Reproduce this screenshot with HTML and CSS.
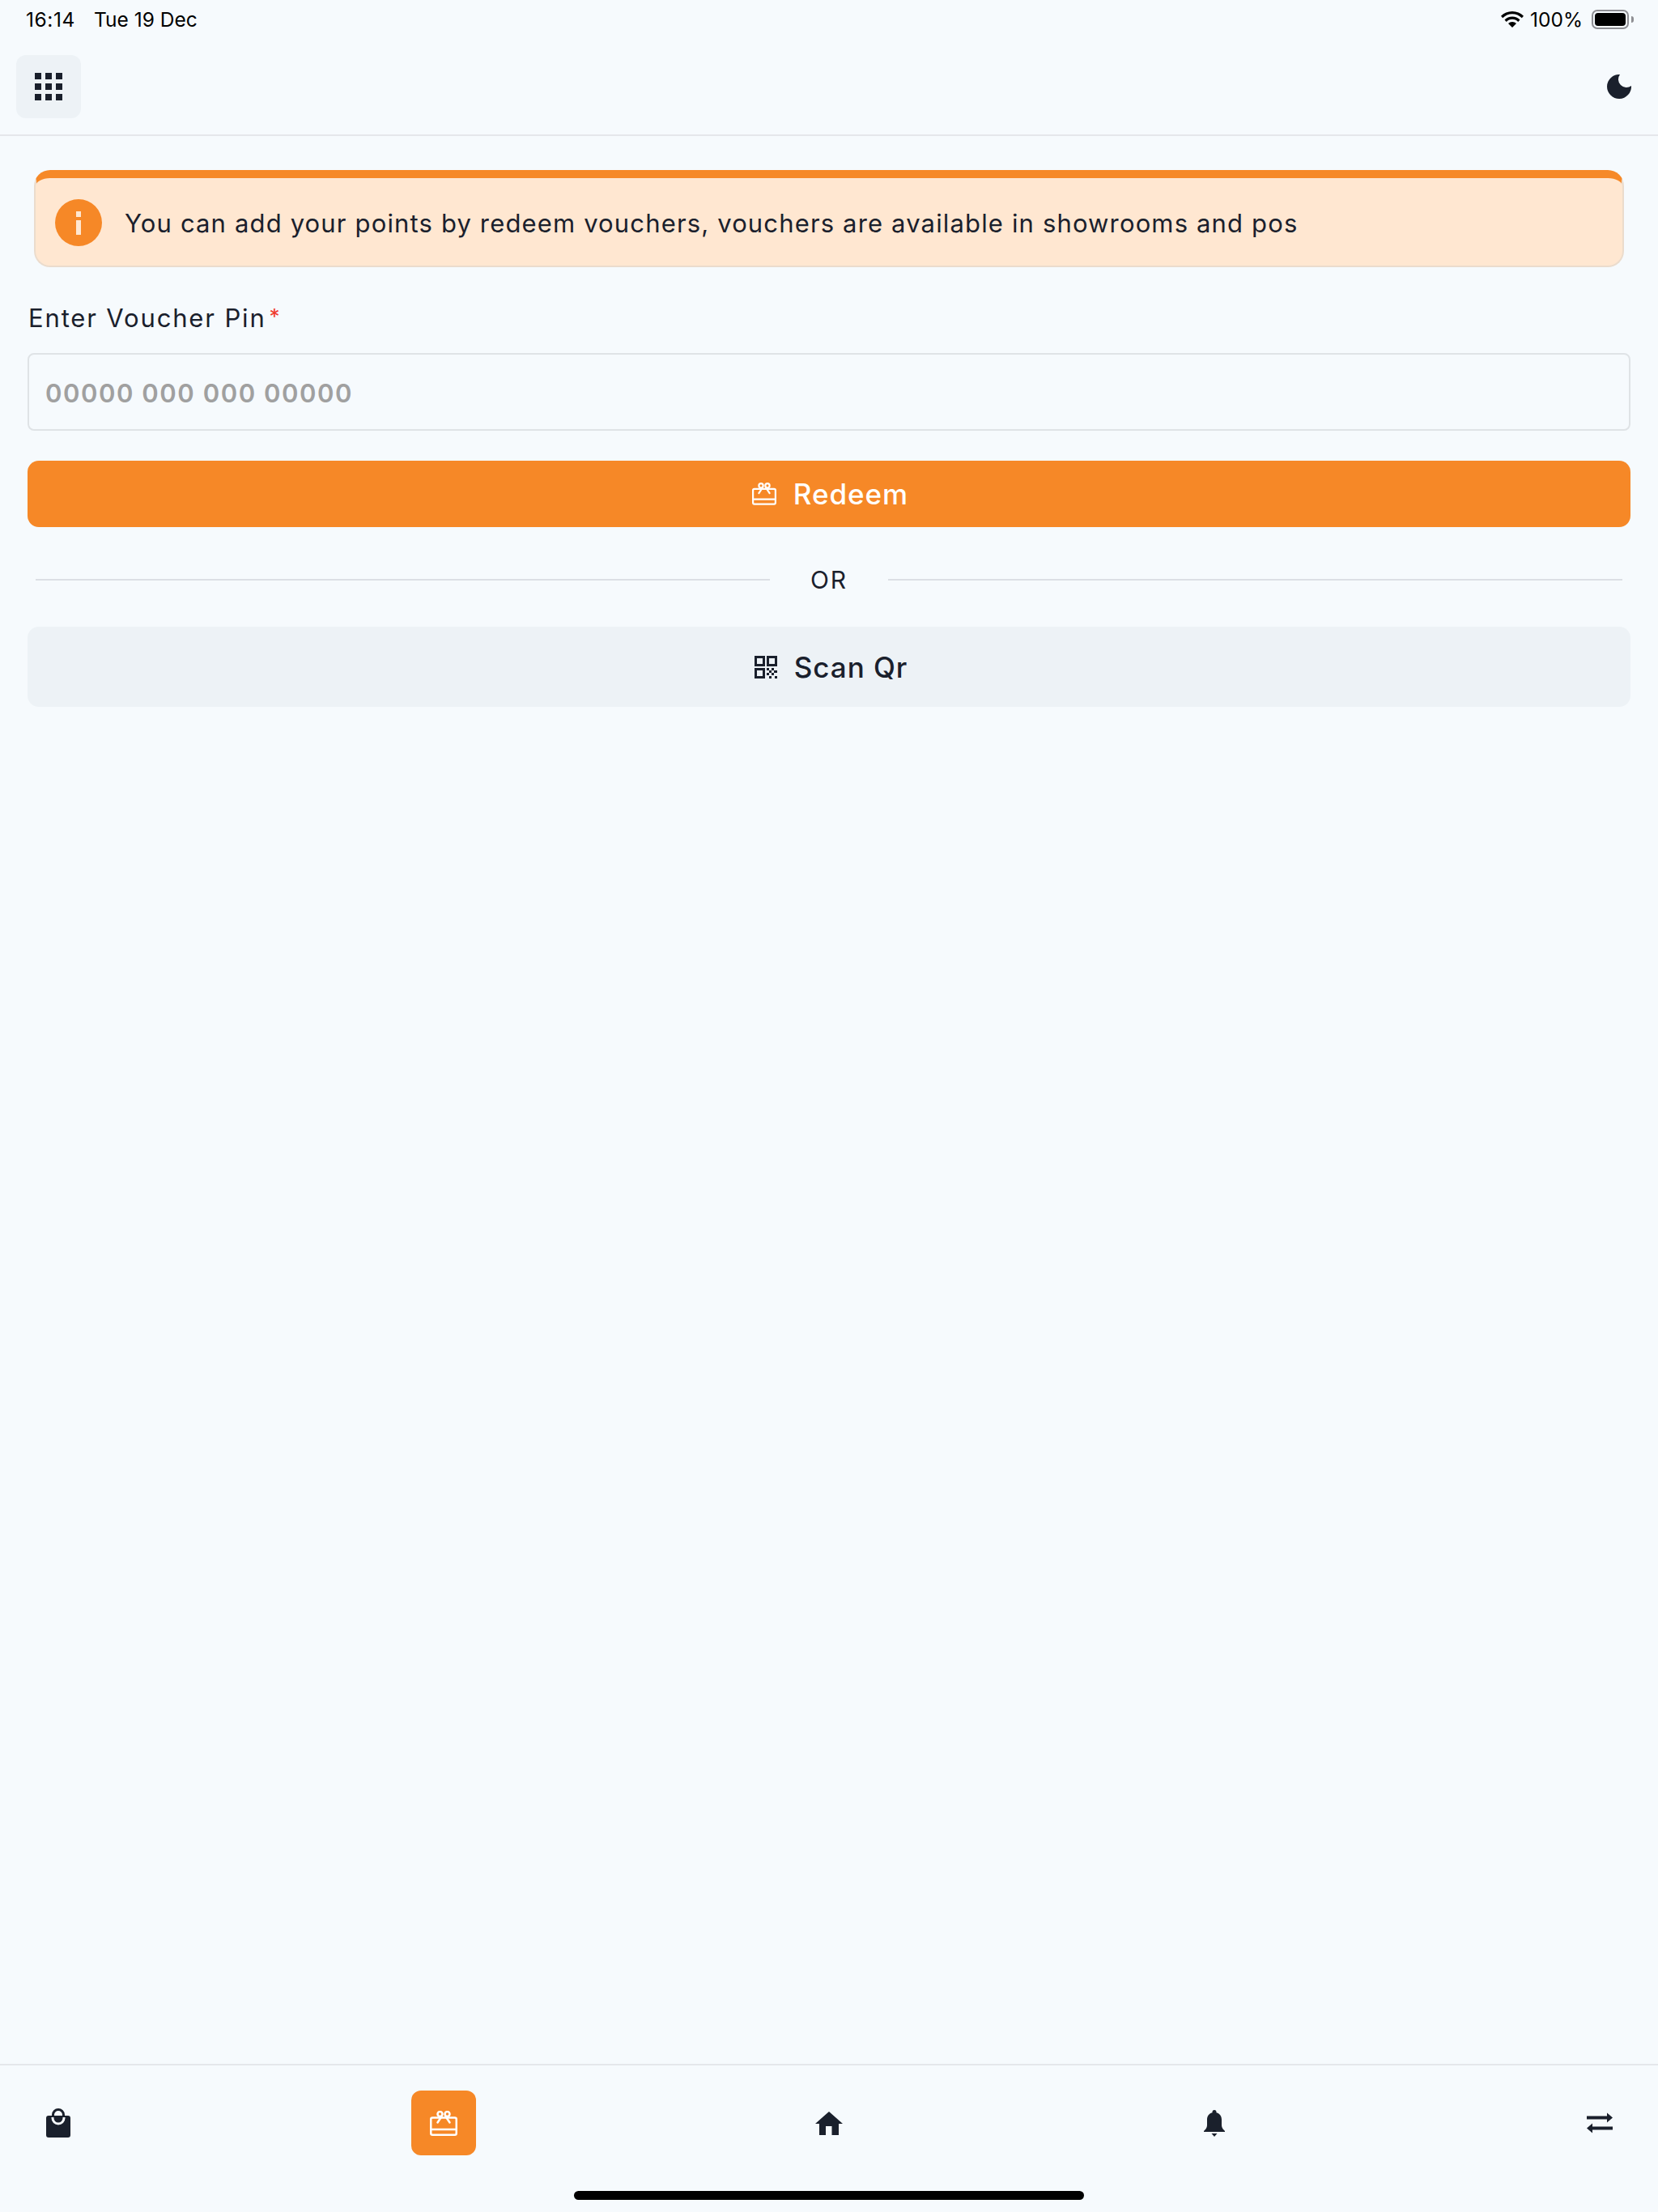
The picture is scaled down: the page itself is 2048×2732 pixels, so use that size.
FILE: index.html
```html
<!DOCTYPE html>
<html lang="en">
<head>
<meta charset="utf-8">
<title>Redeem Voucher</title>
<link rel="stylesheet" href="styles.css">
</head>
<body>
<div class="app">
  <div class="status">
    <div class="status-left"><span class="clock">16:14</span><span>Tue 19 Dec</span></div>
    <div class="status-right">
      <svg class="wifi" viewBox="0 0 28 20"><path d="M14 0C8.500 0 3.600 2.200 0 5.800L2.200 8.200C5.300 5.100 9.400 3.200 14 3.200s8.700 1.900 11.800 5L28 5.800C24.400 2.200 19.500 0 14 0z"/><path d="M14 6.500C10.300 6.500 7 8 4.500 10.500L6.800 12.900C8.700 11 11.200 9.800 14 9.800s5.300 1.200 7.200 3.100L23.500 10.500C21 8 17.700 6.500 14 6.500z"/><path d="M14 13C12 13 10.300 13.800 9 15.100L14 20 19 15.100C17.700 13.800 16 13 14 13z"/></svg>
      <span>100%</span>
      <span class="battery"><span class="battery-fill"></span></span><span class="battery-tip"></span>
    </div>
  </div>
  <header class="topbar">
    <button class="menu-btn" aria-label="Menu">
      <svg class="grid-icon" viewBox="0 0 34 34"><path d="M0 0h8v8H0zM13 0h8v8h-8zM26 0h8v8h-8zM0 13h8v8H0zM13 13h8v8h-8zM26 13h8v8h-8zM0 26h8v8H0zM13 26h8v8h-8zM26 26h8v8h-8z"/></svg>
    </button>
    <svg class="moon" viewBox="0 0 30 30"><path d="M16 0A15 15 0 1 0 30 14A10 10 0 0 1 16 0z"/></svg>
  </header>
  <main class="content">
    <div class="alert">
      <span class="alert-icon"><span class="i-dot"></span><span class="i-bar"></span></span>
      <p class="alert-text">You can add your points by redeem vouchers, vouchers are available in showrooms and pos</p>
    </div>
    <label class="field-label">Enter Voucher Pin<span class="req">*</span></label>
    <input class="pin-input" type="text" placeholder="00000 000 000 00000">
    <button class="btn btn-primary">
      <svg class="gift" viewBox="0 0 34 31"><g fill="none" stroke="currentColor" stroke-width="2.500" stroke-linecap="round" stroke-linejoin="round"><rect x="1.250" y="8.500" width="31.500" height="21.250" rx="2"/><path d="M1.250 23h31.500"/><circle cx="12.500" cy="4" r="3"/><circle cx="21.500" cy="4" r="3"/><path d="M14.500 7l-5 7.500M19.500 7l5 7.500"/></g></svg>
      <span>Redeem</span>
    </button>
    <div class="or-row"><span class="or-line"></span><span class="or-text">OR</span><span class="or-line"></span></div>
    <button class="btn btn-soft">
      <svg class="qr" viewBox="0 0 28 28"><g fill="none" stroke="currentColor" stroke-width="3"><rect x="1.500" y="1.500" width="10" height="10"/><rect x="16.500" y="1.500" width="10" height="10"/><rect x="1.500" y="16.500" width="10" height="10"/></g><path fill="currentColor" d="M15 15h3v3h-3zM21 15h3v3h-3zM18 18h3v3h-3zM24 18h4v3h-4zM15 21h3v3h-3zM21 21h3v3h-3zM18 25h3v3h-3zM25 25h3v3h-3z"/></svg>
      <span>Scan Qr</span>
    </button>
  </main>
  <nav class="bottom">
    <div class="tabs">
      <span class="tab">
        <svg class="bag" viewBox="0 0 30 36"><path fill-rule="evenodd" d="M3 9H7V8A8 8 0 0 1 23 8V9H27a3 3 0 0 1 3 3V33a3 3 0 0 1-3 3H3a3 3 0 0 1-3-3V12a3 3 0 0 1 3-3zM10 9H20V8A5 5 0 0 0 10 8zM6.500 11v1a8.500 8.500 0 0 0 17 0v-1h-3v1a5.500 5.500 0 0 1-11 0v-1z"/></svg>
      </span>
      <span class="tab tab-active">
        <svg class="gift-nav" viewBox="0 0 34 31"><g fill="none" stroke="currentColor" stroke-width="2.500" stroke-linecap="round" stroke-linejoin="round"><rect x="1.250" y="8.500" width="31.500" height="21.250" rx="2"/><path d="M1.250 23h31.500"/><circle cx="12.500" cy="4" r="3"/><circle cx="21.500" cy="4" r="3"/><path d="M14.500 7l-5 7.500M19.500 7l5 7.500"/></g></svg>
      </span>
      <span class="tab">
        <svg class="home" viewBox="0 0 34 29"><path d="M17 0L0 15H5V29H13V18H20.500V29H29V15H34z"/></svg>
      </span>
      <span class="tab">
        <svg class="bell" viewBox="0 0 26 33"><path d="M13 0a2.500 2.500 0 0 0-2.500 2.500v.8C6 4.500 4 8 4 12V19C4 22 2 24 0 26V27H26V26C24 24 22 22 22 19V12C22 8 20 4.500 15.500 3.300V2.500A2.500 2.500 0 0 0 13 0zM9.500 29h7L13 33z"/></svg>
      </span>
      <span class="tab">
        <svg class="swap" viewBox="0 0 34 26"><path d="M1 4.500h25V.5l7 6-7 6V8.500H1zM33 17.500H8v-4l-7 6 7 6v-4h25z"/></svg>
      </span>
    </div>
    <div class="home-row"><span class="home-bar"></span></div>
  </nav>
</div>
</body>
</html>
```
FILE: styles.css
```css
* { box-sizing: border-box; }
html, body { margin: 0; padding: 0; }
body {
  background: #f6fafd;
  color: #1a202c;
  font-family: Inter, "Liberation Sans", sans-serif;
}
.app {
  width: 2048px;
  height: 2732px;
  display: flex;
  flex-direction: column;
}
.status {
  height: 48px;
  padding: 12px 30px 0 32px;
  display: flex;
  justify-content: space-between;
  align-items: flex-start;
  font-size: 24.5px;
  line-height: 24px;
  color: #000;
}
.status-left { display: flex; gap: 23px; }
.clock { letter-spacing: 0.6px; }
.status-right { display: flex; align-items: center; gap: 8px; }
.wifi { width: 28px; height: 20px; fill: #000; }
.battery {
  width: 46px;
  height: 24px;
  margin-left: 3px;
  border: 2px solid #8e8e93;
  border-radius: 7px;
  padding: 2px;
  display: flex;
}
.battery-fill { flex: 1; background: #000; border-radius: 4px; }
.battery-tip {
  width: 3px;
  height: 8px;
  margin-left: -5px;
  background: #8e8e93;
  border-radius: 0 3px 3px 0;
}
.topbar {
  height: 120px;
  padding: 20px 33px 0 20px;
  border-bottom: 2px solid #e5e7eb;
  display: flex;
  justify-content: space-between;
  align-items: flex-start;
}
.menu-btn {
  width: 80px;
  height: 78px;
  padding: 0;
  border: 0;
  border-radius: 12px;
  background: #edf2f6;
  display: flex;
  align-items: center;
  justify-content: center;
}
.grid-icon { width: 34px; height: 34px; fill: #1a202c; }
.moon { width: 30px; height: 30px; margin-top: 24px; fill: #1a202c; }
.content {
  flex: 1;
  padding: 42px 34px 0;
  display: flex;
  flex-direction: column;
}
.alert {
  margin: 0 8px;
  height: 120px;
  display: flex;
  align-items: center;
  gap: 28px;
  padding: 2px 24px 0;
  background: #ffe7d1;
  border: 2px solid #ebdccd;
  border-top: 10px solid #f68928;
  border-radius: 20px;
}
.alert-icon {
  width: 58px;
  height: 58px;
  border-radius: 50%;
  background: #f68827;
  display: flex;
  flex-direction: column;
  align-items: center;
  justify-content: center;
  gap: 4px;
  flex: none;
}
.i-dot { width: 6px; height: 7px; background: #ffe7d1; }
.i-bar { width: 6px; height: 18px; background: #ffe7d1; }
.alert-text {
  margin: 0;
  font-size: 31px;
  letter-spacing: 1.15px;
  white-space: nowrap;
}
.field-label {
  margin-top: 43px;
  height: 36px;
  line-height: 36px;
  font-size: 31px;
  letter-spacing: 1.85px;
  padding-left: 1px;
}
.req {
  color: #f03a2e;
  font-size: 26px;
  margin-left: 4px;
  vertical-align: 4px;
}
.pin-input {
  margin-top: 27px;
  width: 100%;
  height: 96px;
  padding: 3px 20px 0;
  background: transparent;
  border: 2px solid #dfe3e6;
  border-radius: 8px;
  font-family: inherit;
  font-size: 31px;
  font-weight: 600;
  letter-spacing: 1.55px;
  outline: none;
}
.pin-input::placeholder { color: #a0a0a0; opacity: 1; }
.btn {
  width: 100%;
  border: 0;
  border-radius: 14px;
  display: flex;
  align-items: center;
  justify-content: center;
  font-family: inherit;
  font-size: 35px;
  font-weight: 500;
  letter-spacing: 0.95px;
}
.btn-primary {
  margin-top: 37px;
  height: 82px;
  padding: 0 0 0 3px;
  gap: 21px;
  background: #f68827;
  color: #fff;
}
.btn-soft {
  height: 99px;
  padding: 0 0 0 5px;
  gap: 21px;
  background: #edf2f6;
  color: #1a202c;
}
.gift { width: 30px; height: 28px; }
.qr { width: 28px; height: 28px; }
.or-row {
  height: 123px;
  padding: 7px 10px 0;
  display: flex;
  align-items: center;
  gap: 50px;
}
.or-line { flex: 1; height: 2px; background: #dcdfe5; }
.or-text { font-size: 30px; letter-spacing: 1.8px; }
.bottom {
  height: 183px;
  border-top: 2px solid #e5e7eb;
  display: flex;
  flex-direction: column;
}
.tabs {
  height: 155px;
  padding: 31px 32px 0;
  display: flex;
  justify-content: space-between;
  align-items: flex-start;
}
.tab {
  width: 80px;
  height: 80px;
  display: flex;
  align-items: center;
  justify-content: center;
  fill: #1a202c;
}
.tab-active { background: #f68827; border-radius: 12px; color: #fff; }
.bag { width: 30px; height: 36px; }
.gift-nav { width: 34px; height: 31px; }
.home { width: 34px; height: 29px; }
.bell { width: 26px; height: 33px; }
.swap { width: 34px; height: 26px; }
.home-row { display: flex; justify-content: center; }
.home-bar { width: 630px; height: 11px; background: #000; border-radius: 6px; }
```
